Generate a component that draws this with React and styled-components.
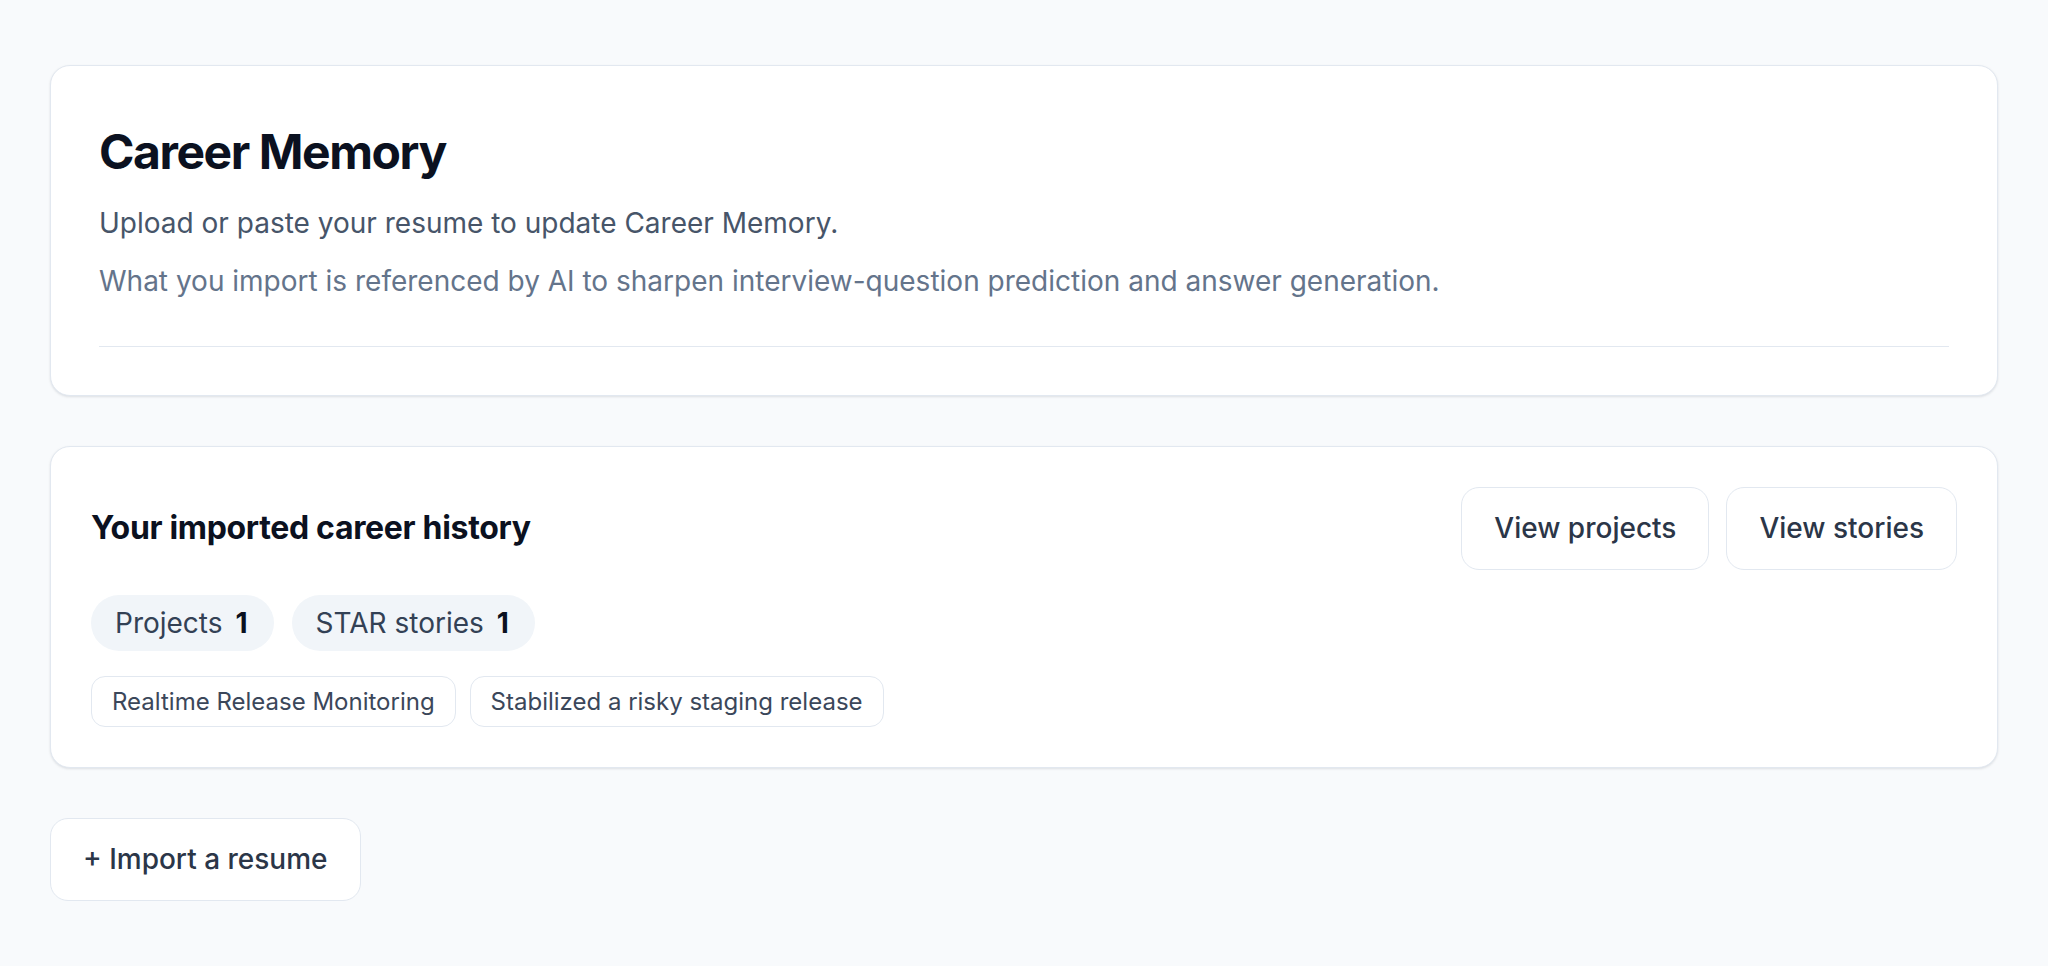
import styled, { createGlobalStyle } from "styled-components";

const GlobalStyle = createGlobalStyle`
  * { box-sizing: border-box; }
  html, body {
    margin: 0;
    padding: 0;
    background: #f8fafc;
    font-family: Inter, "Noto Sans", "Liberation Sans", sans-serif;
    -webkit-font-smoothing: antialiased;
  }
`;

const Page = styled.main`
  min-height: 100vh;
  padding: 65px 50px 60px;
  display: flex;
  flex-direction: column;
  align-items: stretch;
  gap: 50px;
`;

const Card = styled.section`
  background: #ffffff;
  border: 1.5px solid #e2e8f0;
  border-radius: 20px;
  box-shadow: 0 1px 3px rgba(15, 23, 42, 0.08), 0 1px 2px rgba(15, 23, 42, 0.04);
  padding: ${(p) => p.$pad};
`;

const Title = styled.h1`
  margin: 0 0 21px;
  font-size: 48px;
  line-height: 1.2;
  font-weight: 700;
  letter-spacing: -0.03em;
  color: #0b1120;
`;

const Lead = styled.p`
  margin: 0;
  font-size: 28px;
  line-height: 42px;
  color: ${(p) => (p.$muted ? "#64748b" : "#475569")};

  & + & {
    margin-top: 16px;
  }
`;

const Divider = styled.hr`
  margin: 44px 0 0;
  border: 0;
  border-top: 1.5px solid #e2e8f0;
`;

const HeaderRow = styled.div`
  display: flex;
  align-items: center;
  justify-content: space-between;
  gap: 16px;
`;

const SectionTitle = styled.h2`
  margin: 0;
  font-size: 32px;
  line-height: 1.3;
  font-weight: 700;
  letter-spacing: -0.01em;
  color: #0b1120;
`;

const Actions = styled.div`
  display: flex;
  gap: 17px;
`;

const Button = styled.button`
  height: 83px;
  padding: 0 32px;
  background: #ffffff;
  border: 1.5px solid #e2e8f0;
  border-radius: 18px;
  font-family: inherit;
  font-size: 28px;
  font-weight: 500;
  color: #2b3648;
  cursor: pointer;
  white-space: nowrap;
`;

const Row = styled.div`
  display: flex;
  flex-wrap: wrap;
  gap: ${(p) => p.$gap || "16px"};
  margin-top: 25px;
`;

const Pill = styled.span`
  display: inline-flex;
  align-items: center;
  gap: 13px;
  height: 56px;
  padding: 0 26px 0 24px;
  border-radius: 999px;
  background: #f1f5f9;
  font-size: 28px;
  color: #334155;

  b {
    font-weight: 700;
    color: #0b1120;
  }
`;

const Tag = styled.span`
  display: inline-flex;
  align-items: center;
  height: 51px;
  padding: 0 20px;
  border: 1.5px solid #e2e8f0;
  border-radius: 14px;
  background: #ffffff;
  font-size: 24px;
  color: #3b475a;
`;

const ImportRow = styled.div`
  display: flex;
`;

const counts = [
  { label: "Projects", value: 1 },
  { label: "STAR stories", value: 1 },
];

const items = ["Realtime Release Monitoring", "Stabilized a risky staging release"];

export default function App() {
  return (
    <>
      <GlobalStyle />
      <Page>
        <Card $pad="57px 48px 48px">
          <Title>Career Memory</Title>
          <Lead>Upload or paste your resume to update Career Memory.</Lead>
          <Lead $muted>
            What you import is referenced by AI to sharpen interview-question prediction and answer generation.
          </Lead>
          <Divider />
        </Card>

        <Card $pad="40px">
          <HeaderRow>
            <SectionTitle>Your imported career history</SectionTitle>
            <Actions>
              <Button>View projects</Button>
              <Button>View stories</Button>
            </Actions>
          </HeaderRow>
          <Row $gap="18px">
            {counts.map((c) => (
              <Pill key={c.label}>
                {c.label}
                <b>{c.value}</b>
              </Pill>
            ))}
          </Row>
          <Row $gap="14px">
            {items.map((t) => (
              <Tag key={t}>{t}</Tag>
            ))}
          </Row>
        </Card>

        <ImportRow>
          <Button>+ Import a resume</Button>
        </ImportRow>
      </Page>
    </>
  );
}
